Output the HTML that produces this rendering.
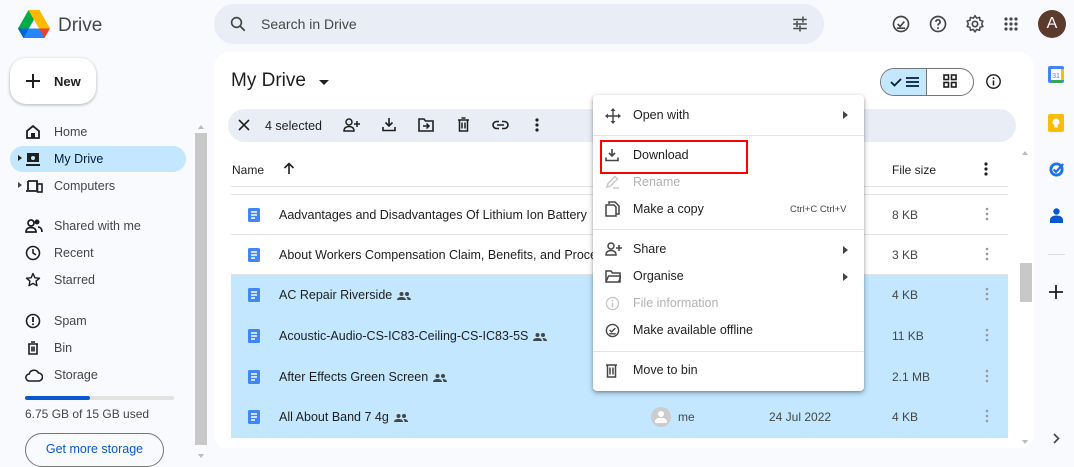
<!DOCTYPE html>
<html><head><meta charset="utf-8"><style>
*{box-sizing:border-box;margin:0;padding:0}
body{width:1074px;height:462px;overflow:hidden;background:#f8fafd;font-family:"Liberation Sans",Arial,sans-serif;color:#1f1f1f;position:relative;font-size:13px}
.abs{position:absolute}
svg{display:block}
.nav{position:absolute;left:54px;font-size:12.5px;color:#444746}
.navi{position:absolute;left:25px}
.row{position:absolute;left:231px;width:777px;height:40px;border-bottom:1px solid #e1e3e1}
.row.sel{background:#c2e7ff;border-bottom:none}
.row .doc{position:absolute;left:17px;top:13px}
.row .t{position:absolute;left:48px;top:13px;font-size:12.5px;color:#1f1f1f;white-space:nowrap}
.row .t svg{display:inline-block;vertical-align:middle;margin-left:5px}
.row .sz{position:absolute;left:661px;top:13px;font-size:12px;color:#444746}
.row .dots{position:absolute;left:754px;top:12px}
.mi{position:absolute;left:40px;font-size:12.5px;color:#1f1f1f}
.mic{position:absolute;left:12px}
.arr{position:absolute;left:250px;width:0;height:0;border-left:5px solid #444;border-top:4px solid transparent;border-bottom:4px solid transparent}
</style></head><body>

<svg class="abs" style="left:18px;top:10px" width="32" height="28" viewBox="0 0 32 28">
<path d="M10.5 0h11l-5.5 9.5z" fill="#188038"/>
<path d="M10.5 0L0 18.5l5.5 9.5L16 9.5z" fill="#00ac47"/>
<path d="M21.5 0L32 18.5H21L10.5 0z" fill="#ffba00"/>
<path d="M21 18.5h11L26.5 28H5.5z" fill="#ea4335"/>
<path d="M0 18.5h21L26.5 28h-21z" fill="#2684fc"/>
<path d="M0 18.5L5.5 28 10.8 18.5z" fill="#0066da"/>
</svg>
<div class="abs" style="left:58px;top:15px;font-size:19px;color:#444746">Drive</div>

<div class="abs" style="left:214px;top:4px;width:610px;height:40px;border-radius:20px;background:#e9eef6"></div>
<svg class="abs" style="left:229px;top:15px" width="18" height="18" viewBox="0 0 24 24"><circle cx="10" cy="10" r="6.5" fill="none" stroke="#444746" stroke-width="2.2"/><path d="M15 15l6 6" stroke="#444746" stroke-width="2.4"/></svg>
<div class="abs" style="left:261px;top:16px;font-size:14px;color:#444746">Search in Drive</div>
<svg class="abs" style="left:791px;top:15px" width="18" height="18" viewBox="0 0 24 24" fill="#444746"><rect x="3" y="5" width="12" height="2"/><rect x="17" y="5" width="4" height="2"/><rect x="15" y="2" width="2" height="8"/><rect x="3" y="11" width="4" height="2"/><rect x="9" y="11" width="12" height="2"/><rect x="7" y="8" width="2" height="8"/><rect x="3" y="17" width="8" height="2"/><rect x="13" y="17" width="8" height="2"/><rect x="11" y="14" width="2" height="8"/></svg>

<svg class="abs" style="left:891px;top:14px" width="20" height="20" viewBox="0 0 24 24"><circle cx="12" cy="12" r="9" fill="none" stroke="#444746" stroke-width="2"/><path d="M8 12l3 3 5-6M7 17h10" fill="none" stroke="#444746" stroke-width="2"/></svg>
<svg class="abs" style="left:928px;top:14px" width="20" height="20" viewBox="0 0 24 24"><circle cx="12" cy="12" r="9" fill="none" stroke="#444746" stroke-width="2"/><path d="M9.5 9.5a2.5 2.5 0 1 1 3.5 2.3c-.8.4-1 1-1 2" fill="none" stroke="#444746" stroke-width="2"/><circle cx="12" cy="17" r="1.2" fill="#444746"/></svg>
<svg class="abs" style="left:965px;top:14px" width="20" height="20" viewBox="0 0 24 24"><path d="M12 2l2 3 3.5-1 .5 3.5 3.5 1-1.5 3.5 1.5 3-3.5 1-.5 3.5-3.5-1-2 3-2-3-3.5 1-.5-3.5-3.5-1 1.5-3-1.5-3.5 3.5-1 .5-3.5 3.5 1z" fill="none" stroke="#444746" stroke-width="1.8" stroke-linejoin="round"/><circle cx="12" cy="12" r="3.2" fill="none" stroke="#444746" stroke-width="2"/></svg>
<svg class="abs" style="left:1003px;top:16px" width="16" height="16" viewBox="0 0 16 16" fill="#444746"><circle cx="3" cy="3" r="1.6"/><circle cx="8" cy="3" r="1.6"/><circle cx="13" cy="3" r="1.6"/><circle cx="3" cy="8" r="1.6"/><circle cx="8" cy="8" r="1.6"/><circle cx="13" cy="8" r="1.6"/><circle cx="3" cy="13" r="1.6"/><circle cx="8" cy="13" r="1.6"/><circle cx="13" cy="13" r="1.6"/></svg>
<div class="abs" style="left:1038px;top:10px;width:28px;height:28px;border-radius:50%;background:#5d3a2e;color:#fff;font-size:16px;text-align:center;line-height:28px">A</div>

<div class="abs" style="left:10px;top:58px;width:86px;height:46px;border-radius:16px;background:#fff;box-shadow:0 1px 3px rgba(0,0,0,.3)"></div>
<svg class="abs" style="left:25px;top:73px" width="16" height="16" viewBox="0 0 16 16"><path d="M8 1v14M1 8h14" stroke="#1f1f1f" stroke-width="2"/></svg>
<div class="abs" style="left:54px;top:74px;font-size:13px;font-weight:bold;color:#1f1f1f">New</div>

<div class="abs" style="left:10px;top:146px;width:176px;height:26px;border-radius:13px;background:#c2e7ff"></div>
<svg class="navi" style="top:124px" width="16" height="16" viewBox="0 0 16 16"><path d="M2 14V7l6-5 6 5v7z" fill="none" stroke="#1f1f1f" stroke-width="1.8"/><rect x="6" y="9" width="4" height="5" fill="#1f1f1f"/></svg>
<div class="nav" style="top:125px">Home</div>
<div class="abs" style="left:18px;top:155px;border-left:4px solid #1f1f1f;border-top:3px solid transparent;border-bottom:3px solid transparent"></div>
<svg class="navi" style="top:151px" width="16" height="16" viewBox="0 0 16 16"><rect x="2" y="2" width="12" height="9" fill="#1f1f1f"/><circle cx="8" cy="7" r="2" fill="#c2e7ff"/><rect x="1" y="13" width="14" height="2" fill="#1f1f1f"/></svg>
<div class="nav" style="top:152px;color:#001d35">My Drive</div>
<div class="abs" style="left:18px;top:182px;border-left:4px solid #444;border-top:3px solid transparent;border-bottom:3px solid transparent"></div>
<svg class="navi" style="top:178px" width="18" height="16" viewBox="0 0 18 16"><path d="M3 3h9v9M1 13h11" fill="none" stroke="#1f1f1f" stroke-width="1.8"/><path d="M3 3v9" stroke="#1f1f1f" stroke-width="1.8"/><rect x="12.5" y="6" width="4.5" height="8" fill="none" stroke="#1f1f1f" stroke-width="1.6"/></svg>
<div class="nav" style="top:179px">Computers</div>
<svg class="navi" style="top:218px" width="18" height="16" viewBox="0 0 18 16"><circle cx="6" cy="5" r="3" fill="none" stroke="#1f1f1f" stroke-width="1.7"/><path d="M1 14c0-3 2-4.5 5-4.5s5 1.5 5 4.5z" fill="none" stroke="#1f1f1f" stroke-width="1.7"/><circle cx="12" cy="4" r="2.5" fill="#1f1f1f"/><path d="M13 9c2 0 4 1.5 4 5" fill="none" stroke="#1f1f1f" stroke-width="1.7"/></svg>
<div class="nav" style="top:219px">Shared with me</div>
<svg class="navi" style="top:245px" width="16" height="16" viewBox="0 0 16 16"><circle cx="8" cy="8" r="6.5" fill="none" stroke="#1f1f1f" stroke-width="1.6"/><path d="M8 4v4l3 2" fill="none" stroke="#1f1f1f" stroke-width="1.6"/></svg>
<div class="nav" style="top:246px">Recent</div>
<svg class="navi" style="top:272px" width="16" height="16" viewBox="0 0 16 16"><path d="M8 1.5l1.9 4.3 4.6.4-3.5 3 1 4.5L8 11.4l-4 2.3 1-4.5-3.5-3 4.6-.4z" fill="none" stroke="#1f1f1f" stroke-width="1.4" stroke-linejoin="round"/></svg>
<div class="nav" style="top:273px">Starred</div>
<svg class="navi" style="top:313px" width="16" height="16" viewBox="0 0 16 16"><circle cx="8" cy="8" r="6.5" fill="none" stroke="#1f1f1f" stroke-width="1.6"/><path d="M8 4v5" stroke="#1f1f1f" stroke-width="1.8"/><circle cx="8" cy="11.3" r="1" fill="#1f1f1f"/></svg>
<div class="nav" style="top:314px">Spam</div>
<svg class="navi" style="top:340px" width="16" height="16" viewBox="0 0 16 16"><path d="M3 4h10M6 2h4M4 4v10h8V4M7 6.5v5M9 6.5v5" fill="none" stroke="#1f1f1f" stroke-width="1.6"/></svg>
<div class="nav" style="top:341px">Bin</div>
<svg class="navi" style="top:368px" width="18" height="14" viewBox="0 0 18 14"><path d="M4.5 13a3.5 3.5 0 0 1-.3-7A5 5 0 0 1 13.5 5a4 4 0 0 1 0 8z" fill="none" stroke="#1f1f1f" stroke-width="1.5"/></svg>
<div class="nav" style="top:368px">Storage</div>
<div class="abs" style="left:25px;top:396px;width:149px;height:4px;background:#e1e3e1;border-radius:2px"></div>
<div class="abs" style="left:25px;top:396px;width:65px;height:4px;background:#0b57d0;border-radius:2px"></div>
<div class="abs" style="left:25px;top:407px;font-size:12px;color:#444746">6.75 GB of 15 GB used</div>
<div class="abs" style="left:25px;top:433px;width:139px;height:34px;border:1px solid #747775;border-radius:17px;color:#0b57d0;font-size:12.5px;text-align:center;line-height:30px">Get more storage</div>
<div class="abs" style="left:195px;top:133px;width:12px;height:312px;background:#c8c8c8"></div>
<div class="abs" style="left:198px;top:125px;border-bottom:4px solid #bbb;border-left:3px solid transparent;border-right:3px solid transparent"></div>
<div class="abs" style="left:198px;top:454px;border-top:4px solid #bbb;border-left:3px solid transparent;border-right:3px solid transparent"></div>

<div class="abs" style="left:214px;top:52px;width:820px;height:398px;background:#fff;border-radius:16px"></div>
<div class="abs" style="left:231px;top:70px;font-size:19px;color:#1f1f1f">My Drive</div>
<div class="abs" style="left:319px;top:80px;border-top:5px solid #1f1f1f;border-left:5px solid transparent;border-right:5px solid transparent"></div>

<div class="abs" style="left:880px;top:68px;width:94px;height:28px;border:1px solid #747775;border-radius:14px;overflow:hidden;background:#fff">
<div style="position:absolute;left:0;top:0;width:46px;height:28px;background:#c2e7ff;border-right:1px solid #747775"></div></div>
<svg class="abs" style="left:890px;top:75px" width="32" height="14" viewBox="0 0 32 14"><path d="M1 7l3.5 3.5L11 4" fill="none" stroke="#001d35" stroke-width="1.8"/><path d="M16 3h13M16 7h13M16 11h13" stroke="#001d35" stroke-width="1.8"/></svg>
<svg class="abs" style="left:943px;top:74px" width="14" height="14" viewBox="0 0 14 14" fill="none" stroke="#1f1f1f" stroke-width="1.6"><rect x="1" y="1" width="4.5" height="4.5"/><rect x="8.5" y="1" width="4.5" height="4.5"/><rect x="1" y="8.5" width="4.5" height="4.5"/><rect x="8.5" y="8.5" width="4.5" height="4.5"/></svg>
<svg class="abs" style="left:985px;top:73px" width="17" height="17" viewBox="0 0 24 24"><circle cx="12" cy="12" r="9.5" fill="none" stroke="#1f1f1f" stroke-width="2"/><path d="M12 10.5v7" stroke="#1f1f1f" stroke-width="2.2"/><circle cx="12" cy="7.3" r="1.3" fill="#1f1f1f"/></svg>

<div class="abs" style="left:228px;top:109px;width:788px;height:33px;border-radius:17px;background:#e9eef6"></div>
<svg class="abs" style="left:238px;top:119px" width="12" height="12" viewBox="0 0 12 12"><path d="M1 1l10 10M11 1L1 11" stroke="#1f1f1f" stroke-width="1.6"/></svg>
<div class="abs" style="left:265px;top:119px;font-size:12.5px;color:#1f1f1f">4 selected</div>
<svg class="abs" style="left:343px;top:118px" width="17" height="14" viewBox="0 0 17 14"><circle cx="6" cy="4" r="3" fill="none" stroke="#1f1f1f" stroke-width="1.5"/><path d="M1 13c0-3 2-4.5 5-4.5s5 1.5 5 4.5z" fill="none" stroke="#1f1f1f" stroke-width="1.5"/><path d="M14 3v6M11 6h6" stroke="#1f1f1f" stroke-width="1.5"/></svg>
<svg class="abs" style="left:382px;top:117px" width="14" height="15" viewBox="0 0 14 15"><path d="M7 1v8M3.5 5.5L7 9l3.5-3.5M1 10v3.5h12V10" fill="none" stroke="#1f1f1f" stroke-width="1.6"/></svg>
<svg class="abs" style="left:418px;top:118px" width="16" height="14" viewBox="0 0 16 14"><path d="M1 1h5l1.5 2H15v10H1z" fill="none" stroke="#1f1f1f" stroke-width="1.6"/><path d="M5 8h6M8.5 5.5L11 8l-2.5 2.5" fill="none" stroke="#1f1f1f" stroke-width="1.5"/></svg>
<svg class="abs" style="left:457px;top:117px" width="13" height="15" viewBox="0 0 13 15"><path d="M1 3h11M4.5 1h4M2.5 3v11h8V3M5 5.5v6M8 5.5v6" fill="none" stroke="#1f1f1f" stroke-width="1.5"/></svg>
<svg class="abs" style="left:492px;top:120px" width="17" height="10" viewBox="0 0 17 10"><path d="M7 1.5H4.5a3.5 3.5 0 0 0 0 7H7M10 1.5h2.5a3.5 3.5 0 0 1 0 7H10M5 5h7" fill="none" stroke="#1f1f1f" stroke-width="1.6"/></svg>
<svg class="abs" style="left:535px;top:118px" width="4" height="14" viewBox="0 0 4 14" fill="#1f1f1f"><circle cx="2" cy="2" r="1.6"/><circle cx="2" cy="7" r="1.6"/><circle cx="2" cy="12" r="1.6"/></svg>

<div class="abs" style="left:232px;top:163px;font-size:12px;color:#1f1f1f">Name</div>
<svg class="abs" style="left:283px;top:162px" width="12" height="13" viewBox="0 0 12 13"><path d="M6 12V2M1.5 6L6 1.5 10.5 6" fill="none" stroke="#1f1f1f" stroke-width="1.6"/></svg>
<div class="abs" style="left:892px;top:163px;font-size:12px;color:#1f1f1f">File size</div>
<svg class="abs" style="left:984px;top:162px" width="4" height="14" viewBox="0 0 4 14" fill="#1f1f1f"><circle cx="2" cy="2" r="1.6"/><circle cx="2" cy="7" r="1.6"/><circle cx="2" cy="12" r="1.6"/></svg>
<div class="abs" style="left:231px;top:186px;width:777px;height:1px;background:#e1e3e1"></div>
<div class="abs" style="left:231px;top:194px;width:777px;height:1px;background:#e1e3e1"></div>

<div class="row" style="top:195px"><svg class="doc" width="12" height="14" viewBox="0 0 12 14"><rect width="12" height="14" rx="1.5" fill="#4285f4"/><path d="M3 4h6M3 7h6M3 10h4" stroke="#fff" stroke-width="1.4"/></svg><div class="t">Aadvantages and Disadvantages Of Lithium Ion Battery</div><div class="sz">8 KB</div><svg class="dots" width="4" height="14" viewBox="0 0 4 14" fill="#999"><circle cx="2" cy="2" r="1.3"/><circle cx="2" cy="7" r="1.3"/><circle cx="2" cy="12" r="1.3"/></svg></div>
<div class="row" style="top:235px"><svg class="doc" width="12" height="14" viewBox="0 0 12 14"><rect width="12" height="14" rx="1.5" fill="#4285f4"/><path d="M3 4h6M3 7h6M3 10h4" stroke="#fff" stroke-width="1.4"/></svg><div class="t">About Workers Compensation Claim, Benefits, and Proce</div><div class="sz">3 KB</div><svg class="dots" width="4" height="14" viewBox="0 0 4 14" fill="#999"><circle cx="2" cy="2" r="1.3"/><circle cx="2" cy="7" r="1.3"/><circle cx="2" cy="12" r="1.3"/></svg></div>
<div class="row sel" style="top:275px;height:41px"><svg class="doc" width="12" height="14" viewBox="0 0 12 14"><rect width="12" height="14" rx="1.5" fill="#4285f4"/><path d="M3 4h6M3 7h6M3 10h4" stroke="#fff" stroke-width="1.4"/></svg><div class="t">AC Repair Riverside<svg width="14" height="8" viewBox="0 0 14 8" fill="#444746"><circle cx="4.5" cy="2" r="2"/><circle cx="10" cy="2" r="2"/><path d="M0 8c0-2 2-3 4.5-3S9 6 9 8zM10 5c2 0 4 1 4 3h-3.5c0-1.2-.3-2.2-1.2-3z"/></svg></div><div class="sz">4 KB</div><svg class="dots" width="4" height="14" viewBox="0 0 4 14" fill="#999"><circle cx="2" cy="2" r="1.3"/><circle cx="2" cy="7" r="1.3"/><circle cx="2" cy="12" r="1.3"/></svg></div>
<div class="row sel" style="top:316px;height:41px"><svg class="doc" width="12" height="14" viewBox="0 0 12 14"><rect width="12" height="14" rx="1.5" fill="#4285f4"/><path d="M3 4h6M3 7h6M3 10h4" stroke="#fff" stroke-width="1.4"/></svg><div class="t">Acoustic-Audio-CS-IC83-Ceiling-CS-IC83-5S<svg width="14" height="8" viewBox="0 0 14 8" fill="#444746"><circle cx="4.5" cy="2" r="2"/><circle cx="10" cy="2" r="2"/><path d="M0 8c0-2 2-3 4.5-3S9 6 9 8zM10 5c2 0 4 1 4 3h-3.5c0-1.2-.3-2.2-1.2-3z"/></svg></div><div class="sz">11 KB</div><svg class="dots" width="4" height="14" viewBox="0 0 4 14" fill="#999"><circle cx="2" cy="2" r="1.3"/><circle cx="2" cy="7" r="1.3"/><circle cx="2" cy="12" r="1.3"/></svg></div>
<div class="row sel" style="top:357px;height:40px"><svg class="doc" width="12" height="14" viewBox="0 0 12 14"><rect width="12" height="14" rx="1.5" fill="#4285f4"/><path d="M3 4h6M3 7h6M3 10h4" stroke="#fff" stroke-width="1.4"/></svg><div class="t">After Effects Green Screen<svg width="14" height="8" viewBox="0 0 14 8" fill="#444746"><circle cx="4.5" cy="2" r="2"/><circle cx="10" cy="2" r="2"/><path d="M0 8c0-2 2-3 4.5-3S9 6 9 8zM10 5c2 0 4 1 4 3h-3.5c0-1.2-.3-2.2-1.2-3z"/></svg></div><div class="sz">2.1 MB</div><svg class="dots" width="4" height="14" viewBox="0 0 4 14" fill="#999"><circle cx="2" cy="2" r="1.3"/><circle cx="2" cy="7" r="1.3"/><circle cx="2" cy="12" r="1.3"/></svg></div>
<div class="row sel" style="top:397px;height:41px"><svg class="doc" width="12" height="14" viewBox="0 0 12 14"><rect width="12" height="14" rx="1.5" fill="#4285f4"/><path d="M3 4h6M3 7h6M3 10h4" stroke="#fff" stroke-width="1.4"/></svg><div class="t">All About Band 7 4g<svg width="14" height="8" viewBox="0 0 14 8" fill="#444746"><circle cx="4.5" cy="2" r="2"/><circle cx="10" cy="2" r="2"/><path d="M0 8c0-2 2-3 4.5-3S9 6 9 8zM10 5c2 0 4 1 4 3h-3.5c0-1.2-.3-2.2-1.2-3z"/></svg></div>
<div style="position:absolute;left:420px;top:10px;width:20px;height:20px;border-radius:50%;background:#ccc"><div style="position:absolute;left:7px;top:4px;width:6px;height:6px;border-radius:50%;background:#fff"></div><div style="position:absolute;left:4px;top:11px;width:12px;height:5px;border-radius:6px 6px 2px 2px;background:#fff"></div></div>
<div style="position:absolute;left:447px;top:13px;font-size:12px;color:#444746">me</div>
<div style="position:absolute;left:538px;top:13px;font-size:12px;color:#444746">24 Jul 2022</div>
<div class="sz">4 KB</div><svg class="dots" width="4" height="14" viewBox="0 0 4 14" fill="#999"><circle cx="2" cy="2" r="1.3"/><circle cx="2" cy="7" r="1.3"/><circle cx="2" cy="12" r="1.3"/></svg></div>
<div class="abs" style="left:214px;top:448px;width:820px;height:14px;background:#f8fafd"></div>

<div class="abs" style="left:1020px;top:263px;width:12px;height:39px;background:#c8c8c8"></div>
<div class="abs" style="left:1022px;top:151px;border-bottom:4px solid #bbb;border-left:3px solid transparent;border-right:3px solid transparent"></div>
<div class="abs" style="left:1022px;top:440px;border-top:4px solid #bbb;border-left:3px solid transparent;border-right:3px solid transparent"></div>

<svg class="abs" style="left:1048px;top:66px" width="16" height="17" viewBox="0 0 16 17"><rect x="0" y="0" width="16" height="17" rx="2" fill="#4285f4"/><rect x="3" y="3" width="10" height="11" fill="#fff"/><rect x="13" y="3" width="3" height="11" fill="#fbbc04"/><rect x="3" y="14" width="10" height="3" fill="#34a853"/><text x="8" y="12" font-size="7" text-anchor="middle" fill="#4285f4" font-family="Liberation Sans">31</text></svg>
<svg class="abs" style="left:1048px;top:114px" width="16" height="18" viewBox="0 0 16 18"><rect width="16" height="18" rx="2" fill="#fbbc04"/><circle cx="8" cy="8" r="3.5" fill="#fff"/><rect x="6.5" y="11" width="3" height="2.5" fill="#fff"/></svg>
<svg class="abs" style="left:1049px;top:162px" width="15" height="15" viewBox="0 0 16 16"><circle cx="8" cy="8" r="6" fill="none" stroke="#1a73e8" stroke-width="3"/><path d="M5 8l2.5 2.5L15 2" fill="none" stroke="#1a73e8" stroke-width="2.4"/></svg>
<svg class="abs" style="left:1050px;top:208px" width="13" height="15" viewBox="0 0 13 15" fill="#0b57d0"><circle cx="6.5" cy="3.5" r="3.2"/><path d="M0 15v-3c0-3 3-4.5 6.5-4.5S13 9 13 12v3z"/></svg>
<div class="abs" style="left:1048px;top:254px;width:17px;height:1px;background:#dadce0"></div>
<svg class="abs" style="left:1049px;top:285px" width="14" height="14" viewBox="0 0 14 14"><path d="M7 0v14M0 7h14" stroke="#1f1f1f" stroke-width="1.8"/></svg>
<svg class="abs" style="left:1053px;top:433px" width="7" height="11" viewBox="0 0 7 11"><path d="M1 1l4.5 4.5L1 10" fill="none" stroke="#444" stroke-width="1.6"/></svg>

<div class="abs" style="left:593px;top:95px;width:271px;height:296px;background:#fff;border-radius:4px;box-shadow:0 2px 6px rgba(0,0,0,.3),0 1px 2px rgba(0,0,0,.2)">
<svg class="mic" style="top:13px" width="16" height="16" viewBox="0 0 16 16" fill="#444746"><path d="M8 0l2.5 3h-5zM8 16l2.5-3h-5zM0 8l3-2.5v5zM16 8l-3-2.5v5z"/><path d="M8 3v10M3 8h10" stroke="#444746" stroke-width="1.4"/></svg>
<div class="mi" style="top:13px">Open with</div><div class="arr" style="top:16px"></div>
<div style="position:absolute;left:0;top:40px;width:271px;height:1px;background:#e3e3e3"></div>
<svg class="mic" style="top:53px" width="14" height="14" viewBox="0 0 14 14"><path d="M7 1v7M4 5l3 3 3-3M1 9.5v3h12v-3" fill="none" stroke="#444746" stroke-width="1.6"/></svg>
<div class="mi" style="top:53px">Download</div>
<svg class="mic" style="top:80px" width="15" height="14" viewBox="0 0 15 14"><path d="M2 12l1-3.5L10 1.5l2.5 2.5-7 7z" fill="none" stroke="#c4c7c5" stroke-width="1.4"/><path d="M8 13h6" stroke="#c4c7c5" stroke-width="1.4"/></svg>
<div class="mi" style="top:80px;color:#b0b3b1">Rename</div>
<svg class="mic" style="top:106px" width="15" height="16" viewBox="0 0 15 16"><path d="M4 3V1h6l4 4v8h-3" fill="none" stroke="#444746" stroke-width="1.5"/><path d="M1 4h8l2 2v9H1z" fill="none" stroke="#444746" stroke-width="1.5"/></svg>
<div class="mi" style="top:107px">Make a copy</div>
<div style="position:absolute;left:197px;top:109px;font-size:9.5px;color:#444746">Ctrl+C Ctrl+V</div>
<div style="position:absolute;left:0;top:134px;width:271px;height:1px;background:#e3e3e3"></div>
<svg class="mic" style="top:147px" width="17" height="14" viewBox="0 0 17 14"><circle cx="6" cy="4" r="3" fill="none" stroke="#444746" stroke-width="1.5"/><path d="M1 13c0-3 2-4.5 5-4.5s5 1.5 5 4.5z" fill="none" stroke="#444746" stroke-width="1.5"/><path d="M14 3v6M11 6h6" stroke="#444746" stroke-width="1.5"/></svg>
<div class="mi" style="top:147px">Share</div><div class="arr" style="top:151px"></div>
<svg class="mic" style="top:175px" width="16" height="13" viewBox="0 0 16 13"><path d="M1 1h5l1.5 2H15v9H1z" fill="none" stroke="#444746" stroke-width="1.5"/><path d="M1 12l2.5-6H16l-2.5 6" fill="none" stroke="#444746" stroke-width="1.4"/></svg>
<div class="mi" style="top:174px">Organise</div><div class="arr" style="top:178px"></div>
<svg class="mic" style="top:201px" width="15" height="15" viewBox="0 0 16 16"><circle cx="8" cy="8" r="6.5" fill="none" stroke="#c4c7c5" stroke-width="1.4"/><path d="M8 7v5" stroke="#c4c7c5" stroke-width="1.6"/><circle cx="8" cy="4.7" r="1" fill="#c4c7c5"/></svg>
<div class="mi" style="top:201px;color:#b0b3b1">File information</div>
<svg class="mic" style="top:228px" width="15" height="15" viewBox="0 0 16 16"><circle cx="8" cy="8" r="6.5" fill="none" stroke="#444746" stroke-width="1.5"/><path d="M5 7.5l2 2 4-4M4.5 11.5h7" fill="none" stroke="#444746" stroke-width="1.5"/></svg>
<div class="mi" style="top:228px">Make available offline</div>
<div style="position:absolute;left:0;top:256px;width:271px;height:1px;background:#e3e3e3"></div>
<svg class="mic" style="top:268px" width="13" height="15" viewBox="0 0 13 15"><path d="M1 2h11M2.5 2v12h8V2M5 4.5v7M8 4.5v7" fill="none" stroke="#444746" stroke-width="1.5"/></svg>
<div class="mi" style="top:268px">Move to bin</div>
</div>
<div class="abs" style="left:600px;top:140px;width:148px;height:34px;border:2px solid #f00"></div>

</body></html>
